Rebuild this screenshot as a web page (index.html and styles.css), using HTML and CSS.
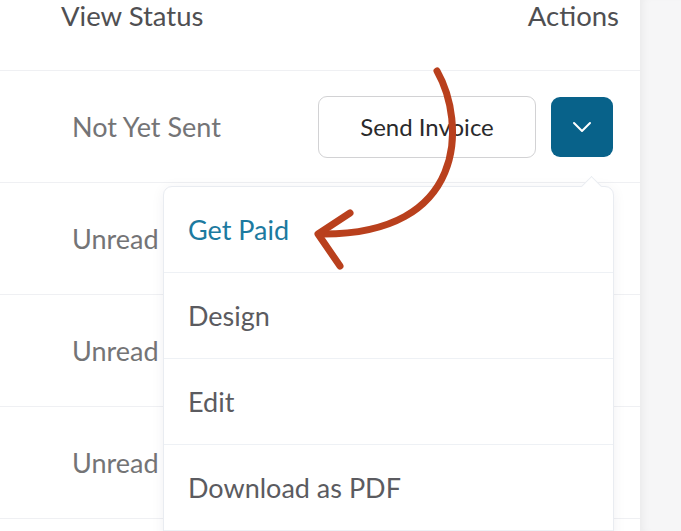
FILE: index.html
```html
<!DOCTYPE html>
<html>
<head>
<meta charset="utf-8">
<link rel="stylesheet" href="styles.css">
</head>
<body>
<div class="page">
  <div class="table">
    <div class="head">
      <span class="hcell">View Status</span>
      <span class="hcell">Actions</span>
    </div>
    <div class="row">
      <span class="status">Not Yet Sent</span>
      <div class="actions">
        <button class="send">Send Invoice</button>
        <button class="toggle">
          <svg width="20" height="12" viewBox="0 0 20 12"><path d="M2 2 L10 10 L18 2" fill="none" stroke="#fff" stroke-width="2" stroke-linecap="round" stroke-linejoin="round"/></svg>
        </button>
      </div>
    </div>
    <div class="row"><span class="status">Unread</span></div>
    <div class="row"><span class="status">Unread</span></div>
    <div class="row"><span class="status">Unread</span></div>
    <div class="row"></div>
  </div>
  <div class="side"></div>

  <div class="menu">
    <div class="caret"></div>
    <div class="item active">Get Paid</div>
    <div class="item">Design</div>
    <div class="item">Edit</div>
    <div class="item">Download as PDF</div>
  </div>

  <svg class="arrow" width="681" height="531" viewBox="0 0 681 531">
    <path d="M437 71 C466 122 468 236 320 234" fill="none" stroke="#b9401d" stroke-width="7" stroke-linecap="round"/>
    <path d="M350 213 L318 234 L340 266" fill="none" stroke="#b9401d" stroke-width="7" stroke-linecap="round" stroke-linejoin="round"/>
  </svg>
</div>
</body>
</html>
```
FILE: styles.css
```css
html, body {
  margin: 0;
  padding: 0;
  background: #ffffff;
  overflow: hidden;
}
body {
  font-family: "Lato", "Open Sans", sans-serif;
}
.page {
  position: relative;
  display: flex;
  width: 681px;
  height: 531px;
  overflow: hidden;
}
.table {
  width: 640px;
  flex: none;
  background: #fff;
}
.side {
  flex: 1;
  background: #f6f6f7;
  box-shadow: inset 8px 0 10px -6px rgba(0, 0, 0, 0.06);
}
.head {
  display: flex;
  justify-content: space-between;
  align-items: flex-start;
  padding: 0 21px 0 61px;
  border-bottom: 1px solid #eff0f3;
  height: 70px;
}
.hcell {
  font-size: 27.5px;
  color: #4f4f52;
  line-height: 32px;
}
.row {
  height: 111px;
  border-bottom: 1px solid #eff0f3;
  display: flex;
  align-items: center;
  justify-content: space-between;
  padding: 0 27px 0 72px;
}
.status {
  font-size: 27px;
  color: #747476;
}
.actions {
  display: flex;
  align-items: center;
  gap: 15px;
}
.send {
  width: 218px;
  height: 62px;
  border: 1.5px solid #d2d2d4;
  border-radius: 9px;
  background: #fff;
  font-family: inherit;
  font-size: 24px;
  color: #2a2a2c;
}
.toggle {
  width: 62px;
  height: 60px;
  border: none;
  border-radius: 9px;
  background: #08628a;
  display: flex;
  align-items: center;
  justify-content: center;
  padding: 0;
}
.menu {
  position: absolute;
  left: 163px;
  top: 186px;
  width: 449px;
  height: 400px;
  background: #fff;
  border: 1px solid #e9ecf1;
  border-radius: 9px;
  box-shadow: 0 2px 14px rgba(30, 40, 70, 0.06);
}
.caret {
  position: absolute;
  right: 14px;
  top: -8px;
  width: 14px;
  height: 14px;
  background: #fff;
  border-left: 1px solid #e9ecf1;
  border-top: 1px solid #e9ecf1;
  transform: rotate(45deg);
}
.item {
  height: 85px;
  border-bottom: 1.5px solid #eef1f5;
  display: flex;
  align-items: center;
  padding-left: 24px;
  font-size: 27px;
  color: #5b5b60;
}
.item.active {
  color: #1c7aa0;
}
.arrow {
  position: absolute;
  left: 0;
  top: 0;
  pointer-events: none;
}
```
